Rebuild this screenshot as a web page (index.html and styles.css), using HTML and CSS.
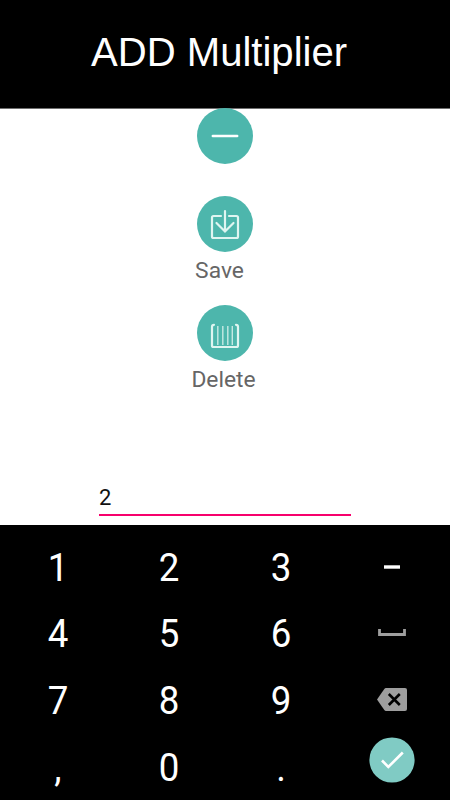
FILE: index.html
```html
<!DOCTYPE html>
<html lang="en">
<head>
<meta charset="utf-8">
<title>ADD Multiplier</title>
<link rel="stylesheet" href="styles.css">
</head>
<body>
<div class="screen">
  <header class="header"><h1 class="title">ADD Multiplier</h1></header>
  <main class="content">
    <button class="action minus" aria-label="Minus">
      <svg class="disc" viewBox="0 0 56 56"><circle cx="28" cy="28" r="28"/><path class="bar" d="M15.8 28h24.4"/></svg>
    </button>
    <button class="action save">
      <svg class="disc" viewBox="0 0 56 56"><circle cx="28" cy="28" r="28"/><path class="line" d="M24 20h-7.500q-1.500 0-1.500 1.500v19q0 1.500 1.500 1.500h23q1.500 0 1.500-1.500v-19q0-1.500-1.500-1.500H32M28 15v19.500M19.500 27l8.500 8.500 8.500-8.500"/></svg>
      <span class="label">Save</span>
    </button>
    <button class="action delete">
      <svg class="disc" viewBox="0 0 56 56"><circle cx="28" cy="28" r="28"/><path class="line" d="M17 19.800q-2 0-2 2v18.700q0 1.500 1.500 1.500h23q1.500 0 1.500-1.500V21.800q0-2-2-2"/><path class="thin" d="M23.500 21v19M28.500 21v19M33.500 21v19M38 21v19" transform="translate(-2.700 0)"/></svg>
      <span class="label">Delete</span>
    </button>
    <div class="field">2</div>
  </main>
  <div class="keypad">
    <div class="key"><span class="digit">1</span></div><div class="key"><span class="digit">2</span></div><div class="key"><span class="digit">3</span></div>
    <div class="key"><svg class="glyph" viewBox="0 0 48 48"><path fill="#fff" d="M16 22.300h16v3.400H16z"/></svg></div>
    <div class="key"><span class="digit">4</span></div><div class="key"><span class="digit">5</span></div><div class="key"><span class="digit">6</span></div>
    <div class="key"><svg class="glyph" viewBox="0 0 48 48"><path class="space" d="M11.500 20v5.500h25V20"/></svg></div>
    <div class="key"><span class="digit">7</span></div><div class="key"><span class="digit">8</span></div><div class="key"><span class="digit">9</span></div>
    <div class="key"><svg class="glyph" viewBox="0 0 48 48"><path fill="#9e9e9e" d="M18 12h19q2 0 2 2v19q0 2-2 2H18q-1 0-1.700-1L9 23.500l7.300-10.500q.7-1 1.700-1z"/><path class="cross" d="M20.800 18l11 11M31.800 18l-11 11"/></svg></div>
    <div class="key"><span class="digit">,</span></div><div class="key"><span class="digit">0</span></div><div class="key"><span class="digit">.</span></div>
    <div class="key done"><svg class="glyph" viewBox="0 0 48 48"><circle cx="24" cy="24" r="22.600" fill="#80cbc4"/><path class="tick" d="M14 24.500l6.300 6.500L34.800 16.500"/></svg></div>
  </div>
</div>
</body>
</html>
```
FILE: styles.css
```css
* { box-sizing: border-box; }
body { margin: 0; background: #fff; font-family: Roboto, sans-serif; }
.screen { width: 450px; height: 800px; display: flex; flex-direction: column; overflow: hidden; }
.header { height: 109px; flex: none; background: #000; border-bottom: 1px solid #6e6e6e; padding: 29px 0 0 91px; }
.title { margin: 0; color: #fff; font: 400 40.100px/46px "Liberation Sans", sans-serif; white-space: nowrap; }
.content { height: 416px; flex: none; display: flex; flex-direction: column; align-items: center; }
.action { border: 0; padding: 0; background: none; display: flex; flex-direction: column; align-items: center; font: inherit; }
.disc { width: 56px; height: 56px; display: block; fill: none; }
.disc circle { fill: #4db6ac; }
.minus { margin-top: -1px; }
.save { margin-top: 32px; height: 109px; }
.delete { height: 109px; }
.label { color: #666; font-size: 22.800px; line-height: 28px; margin-top: 5px; }
.save .label { margin-right: 11px; }
.delete .label { margin-right: 3px; }
.bar { stroke: #fff; stroke-width: 2.500; stroke-linecap: round; }
.line { stroke: #dff5f1; stroke-width: 2.200; stroke-linecap: round; }
.thin { stroke: #c5e9e4; stroke-width: 1.400; }
.field { width: 252px; height: 39px; margin-top: 63px; border-bottom: 2px solid #f7006c; font-size: 22px; line-height: 41px; color: #111; }
.keypad { flex: 1; background: #000; padding: 9px 2px 0; display: grid; grid-template-columns: repeat(4, 111.500px); grid-template-rows: repeat(4, 66.900px); }
.key { color: #fff; font-size: 39px; line-height: 67px; height: 67px; display: flex; align-items: center; justify-content: center; }
.digit { display: block; transform: scaleX(.94); padding-top: 1px; }
.glyph { width: 48px; height: 48px; fill: none; margin-bottom: 2px; }
.space { stroke: #9e9e9e; stroke-width: 2.800; }
.cross { stroke: #000; stroke-width: 2.600; }
.tick { stroke: #fff; stroke-width: 2.600; }
.done { padding-bottom: 14px; }
```
